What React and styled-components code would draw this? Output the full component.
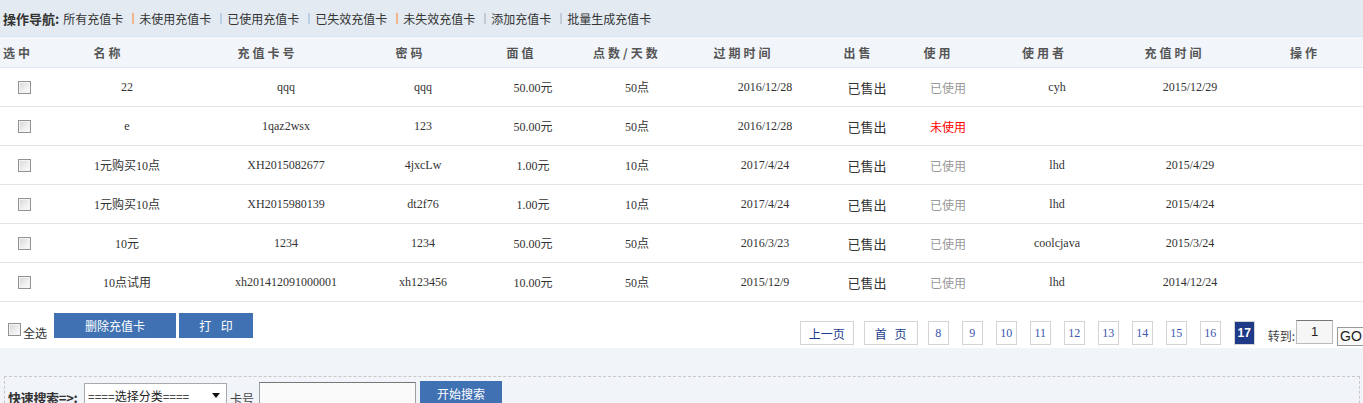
import React from "react";
import styled, { createGlobalStyle } from "styled-components";

const rows = [
  { name: "22", card: "qqq", pwd: "qqq", value: "50.00元", points: "50点", expire: "2016/12/28", used: true, user: "cyh", time: "2015/12/29" },
  { name: "e", card: "1qaz2wsx", pwd: "123", value: "50.00元", points: "50点", expire: "2016/12/28", used: false, user: "", time: "" },
  { name: "1元购买10点", card: "XH2015082677", pwd: "4jxcLw", value: "1.00元", points: "10点", expire: "2017/4/24", used: true, user: "lhd", time: "2015/4/29" },
  { name: "1元购买10点", card: "XH2015980139", pwd: "dt2f76", value: "1.00元", points: "10点", expire: "2017/4/24", used: true, user: "lhd", time: "2015/4/24" },
  { name: "10元", card: "1234", pwd: "1234", value: "50.00元", points: "50点", expire: "2016/3/23", used: true, user: "coolcjava", time: "2015/3/24" },
  { name: "10点试用", card: "xh201412091000001", pwd: "xh123456", value: "10.00元", points: "50点", expire: "2015/12/9", used: true, user: "lhd", time: "2014/12/24" },
];

const navLinks = [
  { label: "所有充值卡", sep: "#f2b48c" },
  { label: "未使用充值卡", sep: "#b9cfe6" },
  { label: "已使用充值卡", sep: "#b9cfe6" },
  { label: "已失效充值卡", sep: "#f2b48c" },
  { label: "未失效充值卡", sep: "#c3cbd6" },
  { label: "添加充值卡", sep: "#c3cbd6" },
  { label: "批量生成充值卡" },
];

const headers = ["选中", "名称", "充值卡号", "密码", "面值", "点数/天数", "过期时间", "出售", "使用", "使用者", "充值时间", "操作"];
const pages = [8, 9, 10, 11, 12, 13, 14, 15, 16, 17];

export default function App() {
  return (
    <>
      <GlobalStyle />
      <Page>
        <NavBar>
          <NavTitle>操作导航:</NavTitle>
          {navLinks.map((l) => (
            <React.Fragment key={l.label}>
              <NavLink>{l.label}</NavLink>
              {l.sep && <NavSep $color={l.sep} />}
            </React.Fragment>
          ))}
        </NavBar>

        <HeadRow>
          {headers.map((h, i) => (
            <HeadCell key={h} $first={i === 0}>{h}</HeadCell>
          ))}
        </HeadRow>

        {rows.map((r, i) => (
          <DataRow key={i}>
            <Cell><Check /></Cell>
            <Cell>{r.name}</Cell>
            <Cell>{r.card}</Cell>
            <Cell>{r.pwd}</Cell>
            <Cell>{r.value}</Cell>
            <Cell>{r.points}</Cell>
            <Cell>{r.expire}</Cell>
            <SoldCell>已售出</SoldCell>
            <UseCell $used={r.used}>{r.used ? "已使用" : "未使用"}</UseCell>
            <Cell>{r.user}</Cell>
            <Cell>{r.time}</Cell>
            <Cell />
          </DataRow>
        ))}

        <Footer>
          <Actions>
            <SelectAll><Check />全选</SelectAll>
            <BlueButton $w={122}>删除充值卡</BlueButton>
            <BlueButton $w={74} $wide>打 印</BlueButton>
          </Actions>
          <Pager>
            <PageText>上一页</PageText>
            <PageText $wide>首 页</PageText>
            {pages.map((p) => (
              <PageNum key={p} $current={p === 17}>{p}</PageNum>
            ))}
            <JumpLabel>转到:</JumpLabel>
            <JumpInput>1</JumpInput>
            <GoButton>GO</GoButton>
          </Pager>
        </Footer>

        <SearchArea>
          <SearchBox>
            <SearchLabel>快速搜索=&gt;:</SearchLabel>
            <FakeSelect>
              <span>====选择分类====</span>
              <Arrow />
            </FakeSelect>
            <PlainLabel>卡号</PlainLabel>
            <TextBox />
            <BlueButton $w={82} $h={24}>开始搜索</BlueButton>
          </SearchBox>
        </SearchArea>
      </Page>
    </>
  );
}

const GlobalStyle = createGlobalStyle`
  html, body { margin: 0; padding: 0; background: #fff; }
  body {
    font-family: "Liberation Serif", "Noto Sans CJK SC", serif;
    font-size: 12px;
    color: #333;
    overflow: hidden;
  }
`;

const sans = `"Noto Sans CJK SC", "Liberation Sans", sans-serif`;
const dataCols = "48px 158px 160px 114px 106px 102px 154px 50px 112px 106px 160px 1fr";
const headCols = "50px 114px 204px 82px 140px 70px 164px 66px 94px 118px 142px 1fr";

const Page = styled.div`
  width: 1363px;
  height: 403px;
  overflow: hidden;
`;

const NavBar = styled.div`
  height: 36px;
  background: #e3eaf2;
  display: flex;
  align-items: center;
  padding-left: 3px;
  font-family: ${sans};
  font-size: 12px;
  color: #333;
`;

const NavTitle = styled.span`
  font-weight: bold;
  font-size: 13px;
  margin-right: 4px;
`;

const NavLink = styled.span`
  white-space: nowrap;
`;

const NavSep = styled.span`
  display: inline-block;
  width: 2px;
  height: 11px;
  background: ${(p) => p.$color};
  margin: 1px 5px 0 9px;
`;

const HeadRow = styled.div`
  display: grid;
  grid-template-columns: ${headCols};
  height: 30px;
  align-items: center;
  background: #f2f6fb;
  border-top: 1px solid #dae7f7;
  border-bottom: 1px solid #dde9f8;
`;

const HeadCell = styled.div`
  font-family: ${sans};
  font-weight: bold;
  font-size: 12px;
  letter-spacing: 3px;
  color: #555;
  text-align: ${(p) => (p.$first ? "left" : "center")};
  padding-left: 3px;
  white-space: nowrap;
`;

const DataRow = styled.div`
  display: grid;
  grid-template-columns: ${dataCols};
  height: 38px;
  align-items: center;
  border-bottom: 1px solid #e4e4e4;
  background: #fff;
`;

const Cell = styled.div`
  font-size: 12px;
  color: #333;
  white-space: nowrap;
  display: flex;
  justify-content: center;
  align-items: center;
`;

const SoldCell = styled(Cell)`
  font-family: ${sans};
  font-size: 13px;
  color: #333;
`;

const UseCell = styled(Cell)`
  font-family: ${sans};
  font-size: 12px;
  color: ${(p) => (p.$used ? "#999" : "#f00")};
`;

const Check = styled.span`
  display: inline-block;
  box-sizing: border-box;
  width: 13px;
  height: 13px;
  border: 1px solid #929292;
  background: linear-gradient(135deg, #d6d6d6 0%, #f0f0f0 60%, #fcfcfc 100%);
  box-shadow: inset 0 0 0 1px #f4f4f4;
`;

const Footer = styled.div`
  height: 46px;
  display: flex;
  justify-content: space-between;
  background: #fff;
  overflow: hidden;
`;

const Actions = styled.div`
  display: flex;
  align-items: flex-end;
  gap: 3px;
  padding: 11px 0 0 8px;
  height: 25px;
`;

const SelectAll = styled.label`
  display: flex;
  align-items: flex-end;
  gap: 2px;
  font-family: ${sans};
  font-size: 12px;
  color: #333;
  line-height: 12px;
  margin-right: 4px;
  margin-bottom: -1px;
  & > span { margin-bottom: 3px; }
`;

const BlueButton = styled.div`
  width: ${(p) => p.$w}px;
  height: ${(p) => p.$h || 25}px;
  flex: none;
  background: #4072b3;
  color: #fff;
  font-family: ${sans};
  font-size: 12px;
  word-spacing: ${(p) => (p.$wide ? "7px" : "0")};
  white-space: pre;
  display: flex;
  align-items: center;
  justify-content: center;
`;

const Pager = styled.div`
  display: flex;
  align-items: flex-start;
  padding-top: 19px;
  margin-right: -10px;
`;

const PageText = styled.div`
  box-sizing: border-box;
  width: 54px;
  height: 24px;
  border: 1px solid #d4d4d4;
  color: #1b3d8c;
  font-family: ${sans};
  font-size: 12px;
  word-spacing: ${(p) => (p.$wide ? "5px" : "0")};
  display: flex;
  align-items: center;
  justify-content: center;
  margin-right: 10px;
`;

const PageNum = styled.div`
  box-sizing: border-box;
  width: 21px;
  height: 24px;
  border: 1px solid #d4d4d4;
  margin-right: 13px;
  display: flex;
  align-items: center;
  justify-content: center;
  font-family: ${(p) => (p.$current ? `"Liberation Sans", sans-serif` : `"Liberation Serif", serif`)};
  font-weight: ${(p) => (p.$current ? "bold" : "normal")};
  font-size: 12px;
  color: ${(p) => (p.$current ? "#fff" : "#3a55b0")};
  background: ${(p) => (p.$current ? "#1f3a87" : "#fff")};
  &:last-of-type { margin-right: 10px; }
`;

const JumpLabel = styled.div`
  font-family: ${sans};
  font-size: 12px;
  color: #444;
  padding-top: 6px;
  margin-right: 1px;
`;

const JumpInput = styled.div`
  box-sizing: border-box;
  width: 37px;
  height: 24px;
  margin-top: -1px;
  border: 1px solid #bbb;
  border-top-color: #777;
  background: #f6f6f6;
  font-family: "Liberation Sans", sans-serif;
  font-size: 13px;
  color: #222;
  display: flex;
  justify-content: center;
  padding-top: 3px;
`;

const GoButton = styled.div`
  box-sizing: border-box;
  width: 36px;
  height: 19px;
  margin: 6px 0 0 4px;
  border: 1px solid #999;
  background: #fafafa;
  font-family: "Liberation Sans", sans-serif;
  font-size: 14px;
  color: #222;
  padding-left: 2px;
  line-height: 17px;
`;

const SearchArea = styled.div`
  height: 100px;
  background: #f1f4f9;
  padding: 28px 3px 0 4px;
`;

const SearchBox = styled.div`
  border: 1px dashed #c8c8c8;
  height: 100px;
  display: flex;
  align-items: flex-start;
  padding: 4px 3px 0 3px;
`;

const SearchLabel = styled.div`
  font-family: ${sans};
  font-weight: bold;
  font-size: 13px;
  color: #333;
  padding-top: 7px;
  width: 76px;
  white-space: nowrap;
  letter-spacing: -0.3px;
`;

const FakeSelect = styled.div`
  box-sizing: border-box;
  width: 143px;
  height: 24px;
  margin-top: 2px;
  border: 1px solid #a9a9a9;
  background: #fff;
  display: flex;
  align-items: center;
  justify-content: space-between;
  padding: 0 6px 0 3px;
  font-family: ${sans};
  font-size: 12px;
  color: #222;
`;

const Arrow = styled.span`
  width: 0;
  height: 0;
  border-left: 4px solid transparent;
  border-right: 4px solid transparent;
  border-top: 5px solid #111;
`;

const PlainLabel = styled.div`
  font-family: ${sans};
  font-size: 12px;
  color: #444;
  padding: 9px 5px 0 3px;
`;

const TextBox = styled.div`
  box-sizing: border-box;
  width: 157px;
  height: 24px;
  margin-top: 1px;
  margin-right: 4px;
  border: 1px solid #a0a0a0;
  border-top-color: #777;
  background: #fafafa;
`;
